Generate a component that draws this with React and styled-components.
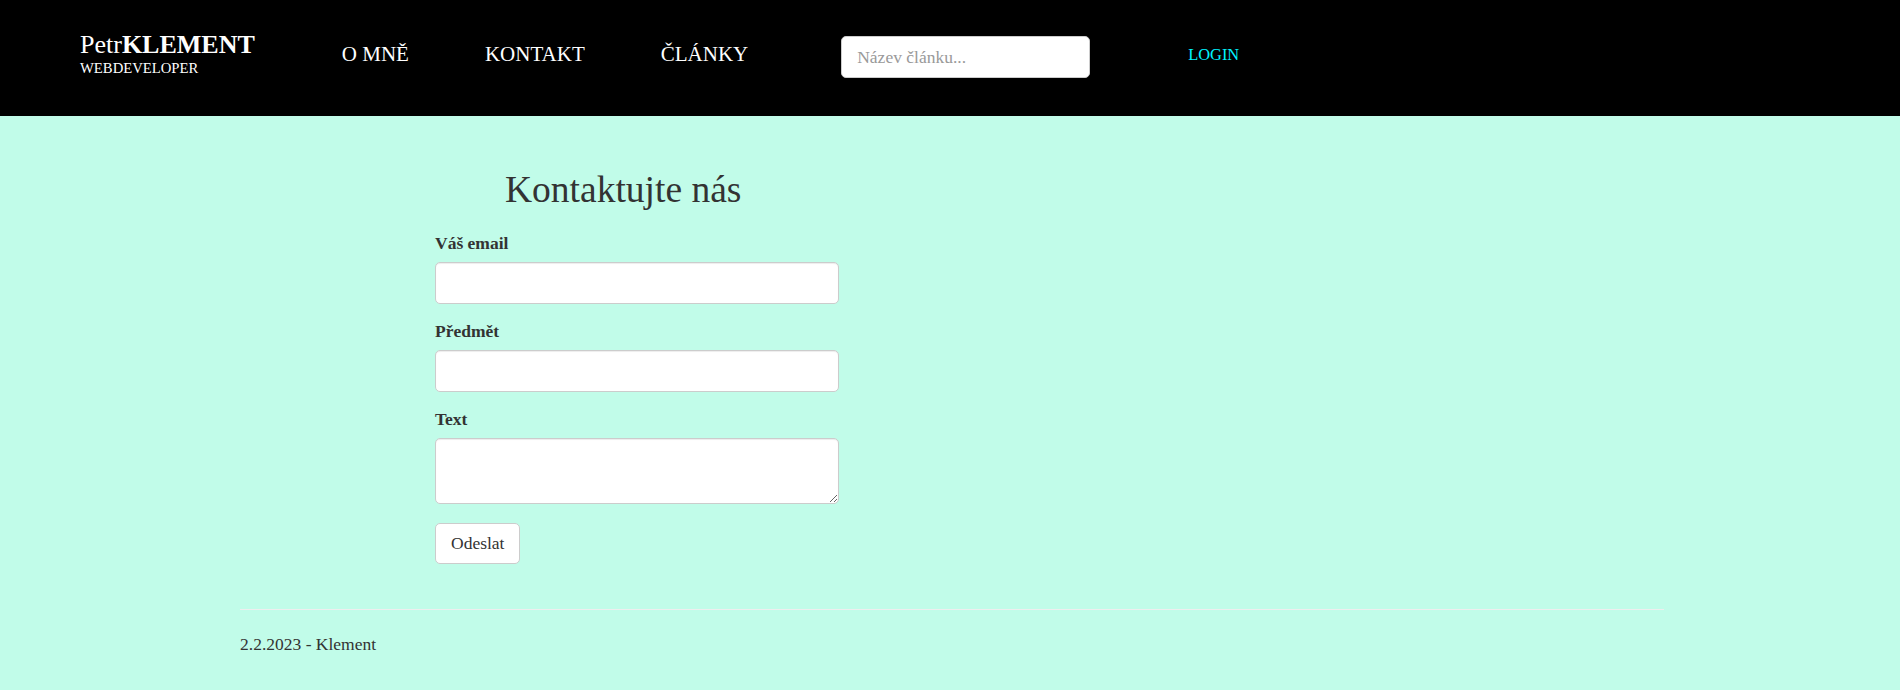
import React from "react";
import styled, { createGlobalStyle } from "styled-components";

const GlobalStyle = createGlobalStyle`
  html, body {
    margin: 0;
    padding: 0;
    background: #c1fce9;
  }
  body {
    font-family: "Liberation Serif", "Times New Roman", serif;
    color: #333;
    font-size: 17.5px;
    line-height: 25px;
  }
`;

const Header = styled.header`
  display: flex;
  align-items: center;
  height: 116px;
  box-sizing: border-box;
  padding: 0 0 7px 80px;
  background: #000;
`;

const Brand = styled.a`
  display: flex;
  flex-direction: column;
  color: #fff;
  text-decoration: none;
  margin-bottom: 1px;
`;

const BrandName = styled.span`
  font-size: 26px;
  line-height: 26px;
  b {
    font-weight: bold;
  }
`;

const BrandTag = styled.span`
  font-size: 14.7px;
  line-height: 15px;
  margin-top: 2.5px;
`;

const NavList = styled.ul`
  display: flex;
  list-style: none;
  margin: 0 0 0 49px;
  padding: 0;
`;

const NavLink = styled.a`
  display: block;
  padding: 0 38px;
  font-size: 21px;
  line-height: 25px;
  color: #fff;
  text-decoration: none;
`;

const SearchInput = styled.input`
  margin: 5px 0 0 55px;
  width: 249px;
  height: 42px;
  box-sizing: border-box;
  border: 1px solid #ccc;
  border-radius: 5px;
  padding: 0 15px;
  font-family: "Liberation Serif", "Times New Roman", serif;
  font-size: 17.5px;
  color: #555;
  background: #fff;
  outline: none;
  &::placeholder {
    color: #999;
  }
`;

const LoginLink = styled.a`
  margin-left: 98px;
  font-size: 16.4px;
  line-height: 25px;
  color: #00f4ff;
  text-decoration: none;
`;

const Container = styled.main`
  width: 1424px;
  margin-left: 240px;
`;

const FormWrap = styled.form`
  margin-left: 195px;
  width: 404px;
`;

const Title = styled.h2`
  margin: 53px 0 21px 70px;
  font-size: 37.5px;
  font-weight: normal;
  line-height: 1.1;
  color: #333;
`;

const Field = styled.div`
  margin-bottom: ${(p) => p.$spacing || 15}px;
`;

const Label = styled.label`
  display: block;
  font-weight: bold;
  font-size: 17.5px;
  line-height: 25px;
  margin-bottom: 6px;
`;

const controlStyle = `
  display: block;
  width: 100%;
  box-sizing: border-box;
  border: 1px solid #ccc;
  border-radius: 5px;
  background: #fff;
  padding: 7px 15px;
  font-family: "Liberation Serif", "Times New Roman", serif;
  font-size: 17.5px;
  color: #555;
  box-shadow: inset 0 1px 1px rgba(0, 0, 0, 0.075);
  outline: none;
  margin: 0;
`;

const Input = styled.input`
  ${controlStyle}
  height: 42px;
`;

const TextArea = styled.textarea`
  ${controlStyle}
  height: 66px;
`;

const Button = styled.button`
  height: 41px;
  padding: 0 15px;
  border: 1px solid #ccc;
  border-radius: 5px;
  background: #fff;
  color: #333;
  font-family: "Liberation Serif", "Times New Roman", serif;
  font-size: 17.5px;
  cursor: pointer;
`;

const Divider = styled.hr`
  margin: 45px 0 22px;
  border: 0;
  border-top: 1px solid #eee;
`;

const Footer = styled.footer`
  font-size: 17.5px;
  line-height: 25px;
  color: #333;
`;

const navItems = ["O MNĚ", "KONTAKT", "ČLÁNKY"];

export default function App() {
  return (
    <>
      <GlobalStyle />
      <Header>
        <Brand href="#">
          <BrandName>
            Petr<b>KLEMENT</b>
          </BrandName>
          <BrandTag>WEBDEVELOPER</BrandTag>
        </Brand>
        <NavList>
          {navItems.map((item) => (
            <li key={item}>
              <NavLink href="#">{item}</NavLink>
            </li>
          ))}
        </NavList>
        <SearchInput type="text" placeholder="Název článku..." />
        <LoginLink href="#">LOGIN</LoginLink>
      </Header>
      <Container>
        <FormWrap onSubmit={(e) => e.preventDefault()}>
          <Title>Kontaktujte nás</Title>
          <Field>
            <Label htmlFor="email">Váš email</Label>
            <Input id="email" type="email" />
          </Field>
          <Field>
            <Label htmlFor="subject">Předmět</Label>
            <Input id="subject" type="text" />
          </Field>
          <Field $spacing={19}>
            <Label htmlFor="text">Text</Label>
            <TextArea id="text" />
          </Field>
          <Button type="submit">Odeslat</Button>
        </FormWrap>
        <Divider />
        <Footer>2.2.2023 - Klement</Footer>
      </Container>
    </>
  );
}
